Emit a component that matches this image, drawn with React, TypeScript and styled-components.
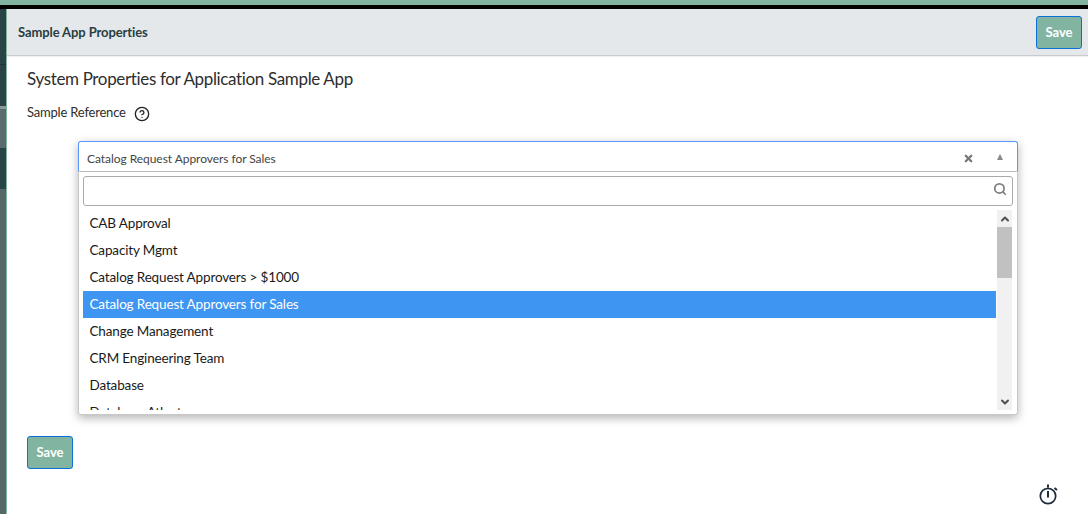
import React from 'react'
import styled, { createGlobalStyle } from 'styled-components'
import { LuX, LuSearch, LuChevronUp, LuChevronDown, LuCircleHelp } from 'react-icons/lu'

const FONT = `Lato, 'Noto Sans', 'Liberation Sans', sans-serif`

const GlobalStyle = createGlobalStyle`
  html, body {
    margin: 0;
    padding: 0;
    background: #fff;
    overflow: hidden;
  }
  * {
    box-sizing: border-box;
  }
`

const Page = styled.div`
  width: 1088px;
  height: 514px;
  display: flex;
  flex-direction: column;
  font-family: ${FONT};
  color: #293e40;
  overflow: hidden;
`

const TopStripe = styled.div`
  height: 9px;
  flex: none;
  background: #000;
  border-top: 5px solid #81b5a1;
`

const Body = styled.div`
  flex: 1;
  display: flex;
  min-height: 0;
`

const SideNav = styled.div`
  width: 7px;
  flex: none;
  display: flex;
  flex-direction: column;
  background: #566768;
  border-right: 1px solid #81b5a1;
`

const SideBlock = styled.div<{ $height: number; $color: string }>`
  height: ${({ $height }) => $height}px;
  flex: none;
  background: ${({ $color }) => $color};
`

const Main = styled.div`
  flex: 1;
  display: flex;
  flex-direction: column;
  min-width: 0;
  position: relative;
`

const Header = styled.header`
  height: 47px;
  flex: none;
  display: flex;
  align-items: center;
  justify-content: space-between;
  padding: 0 6px 0 11px;
  background: #e4e8eb;
  border-bottom: 1px solid #c8cccf;
  box-shadow: 0 1px 1px rgba(0, 0, 0, 0.06);
`

const HeaderTitle = styled.h2`
  margin: 0 0 1px;
  font-size: 13px;
  font-weight: 700;
  letter-spacing: -0.1px;
  color: #293e40;
`

const SaveButton = styled.button`
  width: 46px;
  height: 33px;
  padding: 0 0 1px;
  font-family: ${FONT};
  font-size: 13px;
  font-weight: 700;
  color: #fff;
  background: #81b5a1;
  border: 1px solid #0c6fd6;
  border-radius: 3px;
`

const Content = styled.div`
  flex: 1;
  padding: 12px 20px 0;
  display: flex;
  flex-direction: column;
  align-items: flex-start;
`

const PageTitle = styled.h1`
  margin: 0;
  font-size: 17px;
  font-weight: 400;
  line-height: 22px;
  letter-spacing: -0.35px;
  color: #2e2e2e;
`

const LabelRow = styled.div`
  display: flex;
  align-items: center;
  gap: 8px;
  margin-top: 11px;
  height: 22px;
  font-size: 13px;
  letter-spacing: -0.2px;
  color: #2e2e2e;
`

const Help = styled.span`
  display: flex;
  margin-top: 4px;
  color: #222;
`

const Combo = styled.div`
  align-self: stretch;
  margin: 18px 50px 0 51px;
  width: 940px;
  border-radius: 3px;
  box-shadow: 0 3px 10px rgba(0, 0, 0, 0.3);
`

const ComboValue = styled.div`
  height: 30px;
  display: flex;
  align-items: center;
  padding: 3px 14px 0 8px;
  font-size: 12px;
  letter-spacing: -0.05px;
  color: #444;
  border: 1px solid #5897fb;
  border-bottom: none;
  border-radius: 3px 3px 0 0;
  background: #fff;
`

const ValueText = styled.span`
  flex: 1;
`

const ClearIcon = styled(LuX)`
  color: #777;
  margin-right: 23px;
`

const Caret = styled.span`
  width: 0;
  height: 0;
  margin-bottom: 3px;
  border-left: 3.5px solid transparent;
  border-right: 3.5px solid transparent;
  border-bottom: 6px solid #888;
`

const Dropdown = styled.div`
  height: 244px;
  padding: 4px;
  display: flex;
  flex-direction: column;
  background: #fff;
  border: 1px solid #c9c9c9;
  border-top-color: #bbb;
  border-radius: 0 0 3px 3px;
`

const SearchBox = styled.div`
  height: 30px;
  flex: none;
  display: flex;
  align-items: center;
  justify-content: flex-end;
  padding: 0 5px 4px 0;
  border: 1px solid #aaa;
  border-radius: 3px;
  color: #808080;
`

const ListArea = styled.div`
  flex: 1;
  min-height: 0;
  margin-top: 4px;
  display: flex;
  overflow: hidden;
`

const List = styled.ul`
  flex: 1;
  margin: 0;
  padding: 0;
  list-style: none;
  overflow: hidden;
`

const Option = styled.li<{ $active?: boolean }>`
  height: 27px;
  display: flex;
  align-items: center;
  padding: 0 7px 2px 6.5px;
  font-size: 13.5px;
  letter-spacing: -0.15px;
  color: ${({ $active }) => ($active ? '#fff' : '#1a1a1a')};
  background: ${({ $active }) => ($active ? '#3f95f2' : 'transparent')};
`

const ScrollTrack = styled.div`
  width: 15px;
  margin: 0 1px;
  flex: none;
  display: flex;
  flex-direction: column;
  align-items: center;
  justify-content: space-between;
  background: #f1f1f1;
  position: relative;
  color: #505050;
`

const ScrollButton = styled.div`
  height: 17px;
  display: flex;
  align-items: center;
`

const ScrollThumb = styled.div`
  position: absolute;
  top: 17px;
  left: 0;
  width: 100%;
  height: 51px;
  background: #c1c1c1;
`

const TimerIcon = styled.svg`
  position: absolute;
  right: 29px;
  bottom: 8px;
`

const BottomSave = styled(SaveButton)`
  margin-top: 21px;
`

const OPTIONS = [
  'CAB Approval',
  'Capacity Mgmt',
  'Catalog Request Approvers > $1000',
  'Catalog Request Approvers for Sales',
  'Change Management',
  'CRM Engineering Team',
  'Database',
  'Database Atlanta',
]

const SIDE_BLOCKS = [
  { height: 55, color: '#2a4345' },
  { height: 1, color: '#223638' },
  { height: 41, color: '#2a4345' },
  { height: 3, color: '#8a9a9a' },
  { height: 39, color: '#596b6c' },
  { height: 41, color: '#2a4345' },
]

export default function App() {
  return (
    <Page>
      <GlobalStyle />
      <TopStripe />
      <Body>
        <SideNav>
          {SIDE_BLOCKS.map((block, i) => (
            <SideBlock key={i} $height={block.height} $color={block.color} />
          ))}
        </SideNav>
        <Main>
          <Header>
            <HeaderTitle>Sample App Properties</HeaderTitle>
            <SaveButton>Save</SaveButton>
          </Header>
          <Content>
            <PageTitle>System Properties for Application Sample App</PageTitle>
            <LabelRow>
              Sample Reference
              <Help>
                <LuCircleHelp size={16} />
              </Help>
            </LabelRow>
            <Combo>
              <ComboValue>
                <ValueText>Catalog Request Approvers for Sales</ValueText>
                <ClearIcon size={11} strokeWidth={5} />
                <Caret />
              </ComboValue>
              <Dropdown>
                <SearchBox>
                  <LuSearch size={14} strokeWidth={3} />
                </SearchBox>
                <ListArea>
                  <List>
                    {OPTIONS.map((name, i) => (
                      <Option key={name} $active={i === 3}>
                        {name}
                      </Option>
                    ))}
                  </List>
                  <ScrollTrack>
                    <ScrollThumb />
                    <ScrollButton>
                      <LuChevronUp size={12} strokeWidth={4} />
                    </ScrollButton>
                    <ScrollButton>
                      <LuChevronDown size={12} strokeWidth={4} />
                    </ScrollButton>
                  </ScrollTrack>
                </ListArea>
              </Dropdown>
            </Combo>
            <BottomSave>Save</BottomSave>
          </Content>
          <TimerIcon width="22" height="24" viewBox="0 0 22 24" fill="none" stroke="#1d2b3a" strokeWidth="1.7">
            <circle cx="11" cy="14" r="7.7" />
            <path d="M11 2.5v3M11 9v6.5M17.5 6l2.5 2" strokeWidth="2" />
          </TimerIcon>
        </Main>
      </Body>
    </Page>
  )
}
